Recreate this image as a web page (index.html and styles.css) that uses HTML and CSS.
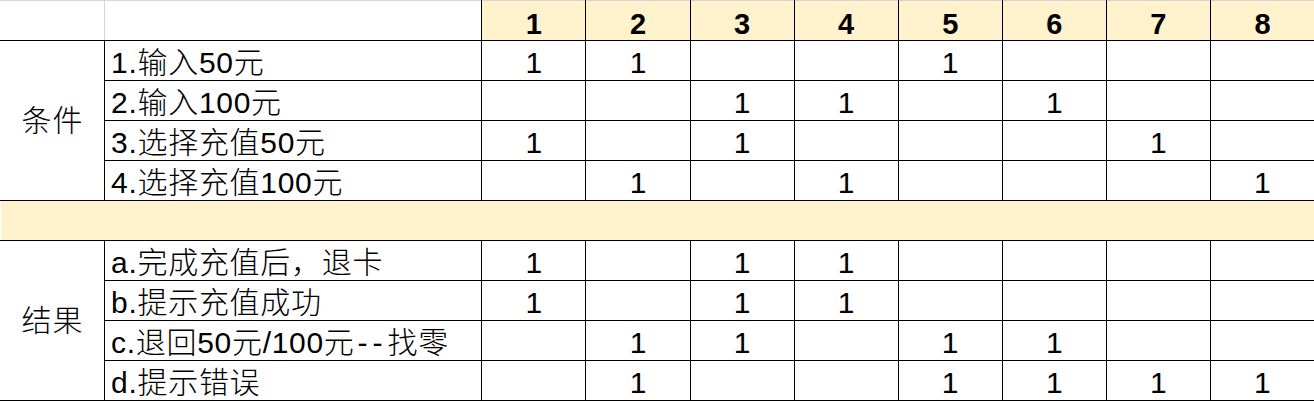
FILE: index.html
```html
<!DOCTYPE html>
<html lang="zh">
<head>
<meta charset="utf-8">
<link rel="stylesheet" href="styles.css">
</head>
<body>
<table class="sheet">
  <colgroup>
    <col class="c-a"><col class="c-b">
    <col class="c-n"><col class="c-n"><col class="c-n"><col class="c-n">
    <col class="c-n"><col class="c-n"><col class="c-n"><col class="c-n">
  </colgroup>
  <tr class="head">
    <td class="blank first"></td><td class="blank second"></td>
    <th>1</th><th>2</th><th>3</th><th>4</th><th>5</th><th>6</th><th>7</th><th>8</th>
  </tr>
  <tr>
    <td class="group" rowspan="4">条件</td>
    <td class="label">1.输入50元</td>
    <td>1</td><td>1</td><td></td><td></td><td>1</td><td></td><td></td><td></td>
  </tr>
  <tr>
    <td class="label">2.输入100元</td>
    <td></td><td></td><td>1</td><td>1</td><td></td><td>1</td><td></td><td></td>
  </tr>
  <tr>
    <td class="label">3.选择充值50元</td>
    <td>1</td><td></td><td>1</td><td></td><td></td><td></td><td>1</td><td></td>
  </tr>
  <tr>
    <td class="label">4.选择充值100元</td>
    <td></td><td>1</td><td></td><td>1</td><td></td><td></td><td></td><td>1</td>
  </tr>
  <tr class="divider"><td colspan="10"></td></tr>
  <tr>
    <td class="group" rowspan="4">结果</td>
    <td class="label">a.完成充值后，退卡</td>
    <td>1</td><td></td><td>1</td><td>1</td><td></td><td></td><td></td><td></td>
  </tr>
  <tr>
    <td class="label">b.提示充值成功</td>
    <td>1</td><td></td><td>1</td><td>1</td><td></td><td></td><td></td><td></td>
  </tr>
  <tr>
    <td class="label">c.退回50元/100元<span class="dash">--</span>找零</td>
    <td></td><td>1</td><td>1</td><td></td><td>1</td><td>1</td><td></td><td></td>
  </tr>
  <tr>
    <td class="label">d.提示错误</td>
    <td></td><td>1</td><td></td><td></td><td>1</td><td>1</td><td>1</td><td>1</td>
  </tr>
</table>
</body>
</html>
```
FILE: styles.css
```css
html, body {
  margin: 0;
  padding: 0;
  background: #ffffff;
}
.sheet {
  border-collapse: collapse;
  table-layout: fixed;
  width: 1315px;
  font-family: "Liberation Sans", "Noto Sans CJK SC", sans-serif;
  font-size: 30px;
  font-weight: 300;
  color: #000;
}
.c-a { width: 104px; }
.c-b { width: 377px; }
.c-n { width: 104px; }
.sheet td, .sheet th {
  border: 1px solid #000;
  height: 39px;
  padding: 0;
  line-height: 34px;
  vertical-align: bottom;
  text-align: center;
  white-space: nowrap;
}
.head th {
  background: #fff2cc;
  font-weight: bold;
  font-size: 29px;
  border-top-color: #d4d4d4;
  line-height: 32px;
}
.head .blank {
  border-top-color: #d4d4d4;
}
.head .first {
  border-left-color: transparent;
  border-right-color: #d4d4d4;
}
.sheet .group {
  border-left-color: transparent;
  vertical-align: middle;
  line-height: 40px;
  letter-spacing: 1px;
}
.sheet .label {
  text-align: left;
  padding-left: 6px;
  letter-spacing: 0.7px;
}
.dash {
  letter-spacing: 5px;
  padding-left: 3px;
}
.divider td {
  background: #fff2cc;
  border-left-color: transparent;
}
```
